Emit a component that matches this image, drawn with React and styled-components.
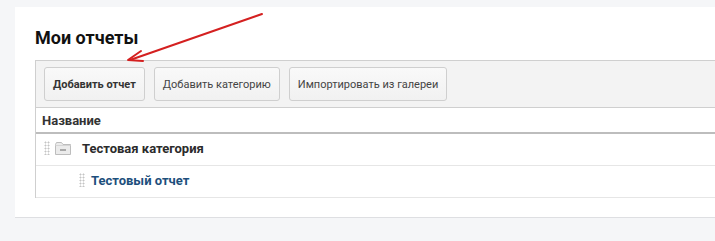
import React from "react";
import styled, { createGlobalStyle } from "styled-components";

const Global = createGlobalStyle`
  html, body { margin: 0; padding: 0; background: #f5f6f8; }
  body { font-family: Roboto, "Noto Sans", Arial, sans-serif; }
`;

const Page = styled.div`
  position: relative;
  width: 715px;
  height: 241px;
  padding: 7px 0 0 15px;
  box-sizing: border-box;
  overflow: hidden;
`;

const Card = styled.div`
  background: #fff;
  height: 211px;
  box-sizing: border-box;
  border-bottom: 1px solid #dedfe2;
  padding: 20px 0 0 20px;
`;

const Title = styled.h1`
  margin: 0 0 12px;
  font-size: 18px;
  font-weight: 700;
  color: #111;
  line-height: 21px;
`;

const Panel = styled.div`
  border-left: 1px solid #cfcfcf;
`;

const Toolbar = styled.div`
  display: flex;
  gap: 9px;
  padding: 6px 8px;
  background: #f3f3f3;
  border-top: 1px solid #cfcfcf;
  border-bottom: 1px solid #cfcfcf;
`;

const Button = styled.button`
  height: 34px;
  padding: 0 8px;
  border: 1px solid #cfcfcf;
  border-radius: 3px;
  background: linear-gradient(#f9f9f9, #f1f1f1);
  font-family: Roboto, "Noto Sans", Arial, sans-serif;
  font-size: 11px;
  font-weight: ${(p) => (p.$primary ? 700 : 400)};
  color: ${(p) => (p.$primary ? "#333" : "#444")};
`;

const Header = styled.div`
  height: 24px;
  display: flex;
  align-items: center;
  padding-left: 6px;
  font-size: 13px;
  font-weight: 700;
  color: #333;
  border-bottom: 2px solid #bdbdbd;
`;

const Row = styled.div`
  display: flex;
  align-items: center;
  padding-left: ${(p) => p.$indent}px;
  border-bottom: 1px solid #e6e6e6;
  font-size: 13px;
  font-weight: 700;
  line-height: 15px;
  padding-bottom: 3px;
  box-sizing: border-box;
  height: 32px;
  color: ${(p) => (p.$link ? "#1d4f7c" : "#2b2b2b")};
`;

const Handle = styled.span`
  width: 6px;
  height: 14px;
  margin-right: ${(p) => p.$gap}px;
  background-image: radial-gradient(circle, #c4c4c4 0.9px, transparent 1.1px);
  background-size: 3px 3px;
  flex: none;
`;

const Arrow = styled.svg`
  position: absolute;
  left: 0;
  top: 0;
  pointer-events: none;
`;

const FolderIcon = () => (
  <svg width="16" height="13" viewBox="0 0 16 13" style={{ marginRight: 11, flex: "none" }}>
    <path d="M0.5 2.5 V12.5 H15.5 V2.5 H8 L6.5 0.5 H1.5 Z" fill="#ebebeb" stroke="#bdbdbd" />
    <path d="M0.5 3.5 H15.5" stroke="#d5d5d5" />
    <path d="M5 8 H11" stroke="#666" strokeWidth="1" />
  </svg>
);

export default function App() {
  return (
    <>
      <Global />
      <Page>
        <Card>
          <Title>Мои отчеты</Title>
          <Panel>
            <Toolbar>
              <Button $primary>Добавить отчет</Button>
              <Button>Добавить категорию</Button>
              <Button>Импортировать из галереи</Button>
            </Toolbar>
            <Header>Название</Header>
            <Row $indent={8}>
              <Handle $gap={5} />
              <FolderIcon />
              Тестовая категория
            </Row>
            <Row $indent={43} $link>
              <Handle $gap={6} />
              Тестовый отчет
            </Row>
          </Panel>
        </Card>
        <Arrow width="715" height="241" viewBox="0 0 715 241">
          <path d="M262 14 L130 60" stroke="#d42020" strokeWidth="2" strokeLinecap="round" />
          <path d="M141 51 L128 60 L143 61" fill="none" stroke="#d42020" strokeWidth="2" strokeLinecap="round" strokeLinejoin="round" />
        </Arrow>
      </Page>
    </>
  );
}
